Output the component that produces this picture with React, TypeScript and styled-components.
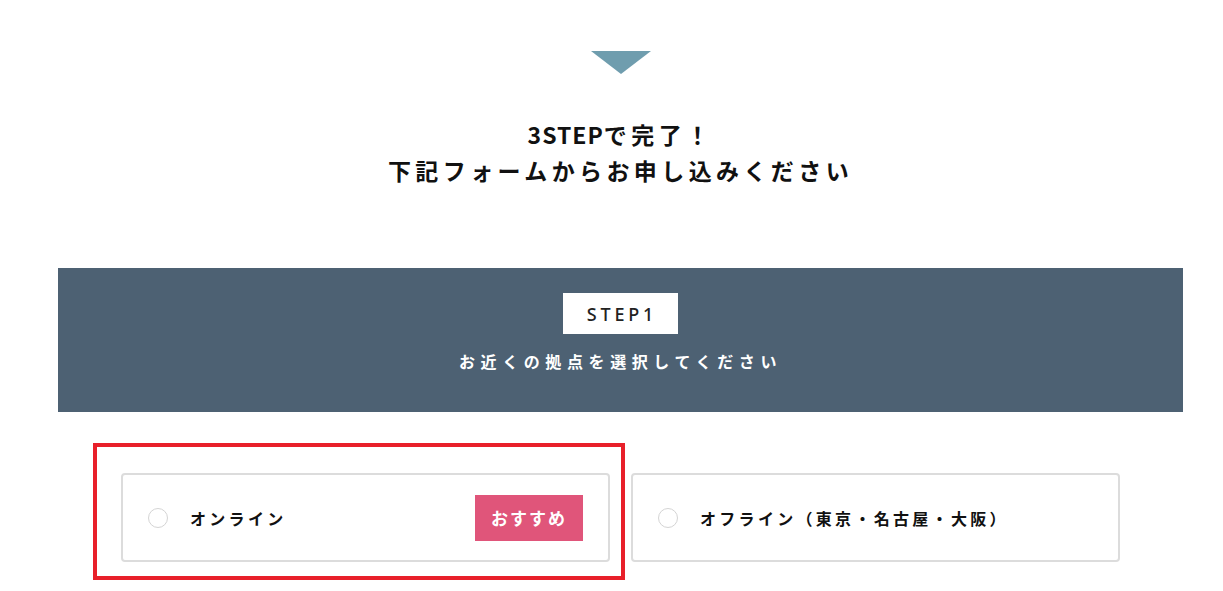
import React from "react";
import styled, { createGlobalStyle } from "styled-components";

const Global = createGlobalStyle`
  html, body { margin: 0; padding: 0; background: #fff; }
  body { font-family: "Noto Sans CJK JP", "Noto Sans", sans-serif; color: #111; min-height: 591px; }
`;

const Page = styled.div`
  width: 1125px;
  margin-left: 58px;
  padding-top: 51px;
  padding-bottom: 30px;
  display: flex;
  flex-direction: column;
  align-items: center;
`;

const Arrow = styled.div`
  width: 0;
  height: 0;
  border-left: 30px solid transparent;
  border-right: 30px solid transparent;
  border-top: 23px solid #6f9dae;
`;

const Title = styled.h2`
  margin: 42px 0 0;
  font-size: 23px;
  font-weight: 700;
  line-height: 36px;
  letter-spacing: 4.4px;
  text-align: center;
  color: #111;
`;

const Latin = styled.span`
  letter-spacing: 1px;
`;

const Band = styled.section`
  align-self: stretch;
  margin-top: 80px;
  height: 144px;
  background: #4d6173;
  display: flex;
  flex-direction: column;
  align-items: center;
  padding-top: 25px;
  box-sizing: border-box;
`;

const StepLabel = styled.div`
  width: 115px;
  height: 41px;
  background: #fff;
  color: #222;
  font-family: "Noto Sans", "Noto Sans CJK JP", sans-serif;
  font-size: 18px;
  font-weight: 500;
  letter-spacing: 3.8px;
  padding-left: 3px;
  box-sizing: border-box;
  display: flex;
  align-items: center;
  justify-content: center;
`;

const StepText = styled.p`
  margin: 15px 0 0;
  color: #fff;
  font-size: 16px;
  font-weight: 700;
  letter-spacing: 5.6px;
  line-height: 24px;
`;

const Options = styled.div`
  align-self: stretch;
  padding: 61px 63px 0;
  display: grid;
  grid-template-columns: 1fr 1fr;
  gap: 21px;
`;

const Highlight = styled.div`
  position: relative;
`;

const RedBox = styled.div`
  position: absolute;
  left: -28px;
  top: -30px;
  right: -15px;
  bottom: -18px;
  border: 4px solid #e8202a;
  pointer-events: none;
`;

const Card = styled.label`
  height: 89px;
  box-sizing: border-box;
  border: 2px solid #dcdcdc;
  border-radius: 4px;
  display: flex;
  align-items: center;
  padding: 0 25px 0 25px;
  background: #fff;
`;

const Radio = styled.span`
  width: 18px;
  height: 18px;
  border: 1.5px solid #d4d4d4;
  border-radius: 50%;
  flex: none;
`;

const Label = styled.span`
  margin-left: 22px;
  font-size: 16px;
  font-weight: 700;
  letter-spacing: 3.3px;
  color: #111;
  flex: 1;
`;

const Badge = styled.span`
  width: 108px;
  height: 46px;
  background: #e0557a;
  color: #fff;
  font-size: 17px;
  font-weight: 700;
  letter-spacing: 2px;
  display: flex;
  align-items: center;
  justify-content: center;
`;

export default function App() {
  return (
    <>
      <Global />
      <Page>
        <Arrow />
        <Title>
          <Latin>3STEP</Latin>で完了！
          <br />
          下記フォームからお申し込みください
        </Title>
        <Band>
          <StepLabel>STEP1</StepLabel>
          <StepText>お近くの拠点を選択してください</StepText>
        </Band>
        <Options>
          <Highlight>
            <Card>
              <Radio />
              <Label>オンライン</Label>
              <Badge>おすすめ</Badge>
            </Card>
            <RedBox />
          </Highlight>
          <Card>
            <Radio />
            <Label>オフライン（東京・名古屋・大阪）</Label>
          </Card>
        </Options>
      </Page>
    </>
  );
}
